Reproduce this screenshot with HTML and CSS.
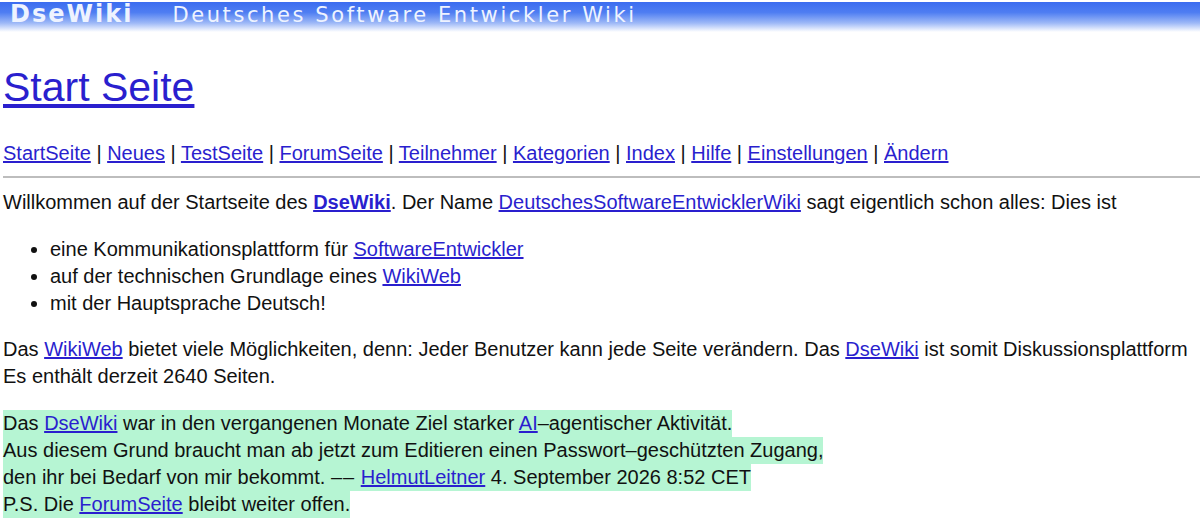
FILE: index.html
```html
<!DOCTYPE html>
<html lang="de">
<head>
<meta charset="utf-8">
<title>DseWiki: Start Seite</title>
<link rel="stylesheet" href="styles.css">
</head>
<body>
<div class="banner">
  <span class="logo">DseWiki</span>
  <span class="tagline">Deutsches Software Entwickler Wiki</span>
</div>
<main class="page">
  <h1 class="title"><a href="#">Start Seite</a></h1>
  <nav class="nav">
    <a href="#">StartSeite</a> | <a href="#">Neues</a> | <a href="#">TestSeite</a> | <a href="#">ForumSeite</a> | <a href="#">Teilnehmer</a> | <a href="#">Kategorien</a> | <a href="#">Index</a> | <a href="#">Hilfe</a> | <a href="#">Einstellungen</a> | <a href="#">Ändern</a>
  </nav>
  <hr class="rule">
  <p class="para">Willkommen auf der Startseite des <a href="#"><b>DseWiki</b></a>. Der Name <a href="#">DeutschesSoftwareEntwicklerWiki</a> sagt eigentlich schon alles: Dies ist</p>
  <ul class="list">
    <li>eine Kommunikationsplattform für <a href="#">SoftwareEntwickler</a></li>
    <li>auf der technischen Grundlage eines <a href="#">WikiWeb</a></li>
    <li>mit der Hauptsprache Deutsch!</li>
  </ul>
  <p class="para">Das <a href="#">WikiWeb</a> bietet viele Möglichkeiten, denn: Jeder Benutzer kann jede Seite verändern. Das <a href="#">DseWiki</a> ist somit Diskussionsplattform<br>Es enthält derzeit 2640 Seiten.</p>
  <div class="notice">
    <div class="notice-line">Das <a href="#">DseWiki</a> war in den vergangenen Monate Ziel starker <a href="#">AI</a>–agentischer Aktivität.</div>
    <div class="notice-line">Aus diesem Grund braucht man ab jetzt zum Editieren einen Passwort–geschützten Zugang,</div>
    <div class="notice-line">den ihr bei Bedarf von mir bekommt. <span class="dash">––</span> <a href="#">HelmutLeitner</a> 4. September 2026 8:52 CET</div>
    <div class="notice-line">P.S. Die <a href="#">ForumSeite</a> bleibt weiter offen.</div>
  </div>
</main>
</body>
</html>
```
FILE: styles.css
```css
html, body {
  margin: 0;
  padding: 0;
  overflow: hidden;
  background: #ffffff;
}
body {
  font-family: "Liberation Sans", Arial, sans-serif;
  font-size: 20px;
  color: #111111;
  width: 1200px;
}
a {
  color: #2a1fce;
}
.banner {
  margin-top: 2px;
  height: 30px;
  background: linear-gradient(to bottom, #3b6cf0 0%, #4f7ef2 35%, #9db8f7 70%, #ffffff 100%);
  display: flex;
  align-items: flex-start;
  gap: 39px;
  padding-left: 10px;
  font-family: "DejaVu Sans", sans-serif;
  color: #eef3ff;
  white-space: nowrap;
}
.logo {
  font-weight: bold;
  font-size: 24px;
  letter-spacing: 2px;
  line-height: 24px;
}
.tagline {
  font-size: 21px;
  letter-spacing: 2.6px;
  line-height: 27px;
}
.page {
  padding: 0 3px;
}
.title {
  margin: 32px 0 0 0;
  font-size: 41px;
  font-weight: normal;
  line-height: 46px;
}
.nav {
  margin-top: 30px;
  line-height: 27px;
  white-space: nowrap;
}
.rule {
  margin: 9px -3px 11px 0;
  border: 0;
  border-top: 2px solid #bdbdbd;
  height: 0;
}
.para {
  margin: 0 0 20px 0;
  line-height: 27px;
  white-space: nowrap;
}
.list {
  margin: 0 0 19px 0;
  padding-left: 47px;
  line-height: 27px;
}
.notice {
  display: flex;
  flex-direction: column;
  align-items: flex-start;
}
.notice-line {
  background: #b6f5d3;
  line-height: 27px;
  white-space: nowrap;
}
.dash {
  letter-spacing: 1px;
}
```
